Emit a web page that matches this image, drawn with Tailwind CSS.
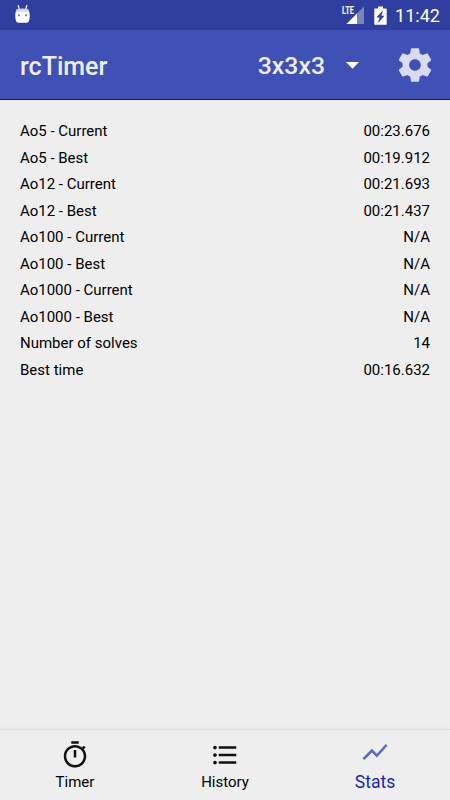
<!DOCTYPE html>
<html lang="en">
  <head>
    <meta charset="UTF-8" />
    <meta name="viewport" content="width=device-width, initial-scale=1.0" />
    <title>rcTimer</title>
    <script src="https://cdn.jsdelivr.net/npm/@tailwindcss/browser@4"></script>
  </head>
  <body class="bg-[#eeeeee] font-[Roboto,sans-serif] text-black h-screen flex flex-col overflow-hidden">
    <!-- Status bar -->
    <div class="h-[30px] shrink-0 bg-[#303f9f] text-white flex items-center pl-[15px] pr-[10px]">
      <svg class="w-[15px] h-[18px] -mt-0.5" viewBox="0 0 15 18" fill="none">
        <path d="M3.2 0.5l1 3.5M11.8 0.5l-1 3.5" stroke="#fff" stroke-width="1.2" stroke-linecap="round"/>
        <path d="M1.5 4.2Q7.5 2.6 13.5 4.2L14 6.5H1z" fill="#d3d6ec"/>
        <path d="M0.8 6.3H14.2Q15.3 11.5 14 16Q13.6 17.7 11.5 17.8H3.5Q1.4 17.7 1 16Q-.3 11.5 .8 6.3z" fill="#fff"/>
        <path d="M3 9.2h2v2H3zM10 9.2h2v2h-2z" fill="#7f88c4"/>
      </svg>
      <svg class="w-[24px] h-[20px] ml-auto" viewBox="0 0 24 20">
        <path d="M23 1.5V19H5.5z" fill="#7b85c2"/>
        <path d="M0 0H14.5V9.5H0z" fill="#303f9f"/>
        <path d="M16 8.5V19H5.5z" fill="#fff"/>
        <text x="1" y="9" font-family="Roboto, sans-serif" font-size="10.5" font-weight="700" fill="#fff" textLength="12" lengthAdjust="spacingAndGlyphs">LTE</text>
      </svg>
      <svg class="w-[13px] h-[19px] ml-[9px]" viewBox="0 0 13 19">
        <path d="M4 0.5h5v2h3q.7 0 .7.8V18q0 .7-.7.7H1q-.7 0-.7-.7V3.3q0-.8.7-.8h3z" fill="#fff"/>
        <path d="M8.5 5L3 11.2h3L4.5 16.2L10 10H7z" fill="#303f9f" stroke="#303f9f" stroke-width=".6"/>
      </svg>
      <span class="ml-[8px] w-[45px] text-[18px] leading-[30px] text-center whitespace-nowrap relative top-px">11:42</span>
    </div>

    <!-- Toolbar -->
    <header class="h-[70px] shrink-0 bg-[#3f51b5] border-b border-[#001694] text-[#eeeeee] flex items-center pl-5 pr-[15px] pt-[3px]">
      <h1 class="text-[25px] font-medium leading-none">rcTimer</h1>
      <div class="ml-auto flex items-center">
        <span class="text-[24.8px] font-medium leading-none pt-px">3x3x3</span>
        <svg class="w-[13px] h-[7px] ml-[21px] -mt-px" viewBox="0 0 13 7"><path d="M0 0h13L6.5 6.7z" fill="#fff"/></svg>
      </div>
      <svg class="w-10 h-10 ml-[36px] -mt-0.5" viewBox="0 0 24 24" fill="#d9dcf0">
        <path d="M19.43 12.98c.04-.32.07-.64.07-.98s-.03-.66-.07-.98l2.11-1.65c.19-.15.24-.42.12-.64l-2-3.46c-.12-.22-.39-.3-.61-.22l-2.49 1c-.52-.4-1.08-.73-1.69-.98l-.38-2.65C14.46 2.18 14.25 2 14 2h-4c-.25 0-.46.18-.49.42l-.38 2.65c-.61.25-1.17.59-1.69.98l-2.49-1c-.23-.09-.49 0-.61.22l-2 3.46c-.13.22-.07.49.12.64l2.11 1.65c-.04.32-.07.65-.07.98s.03.66.07.98l-2.11 1.65c-.19.15-.24.42-.12.64l2 3.46c.12.22.39.3.61.22l2.49-1c.52.4 1.08.73 1.69.98l.38 2.65c.03.24.24.42.49.42h4c.25 0 .46-.18.49-.42l.38-2.65c.61-.25 1.17-.59 1.69-.98l2.49 1c.23.09.49 0 .61-.22l2-3.46c.12-.22.07-.49-.12-.64l-2.11-1.65zM12 15.5c-1.93 0-3.5-1.57-3.5-3.5s1.57-3.5 3.5-3.5 3.5 1.57 3.5 3.5-1.57 3.5-3.5 3.5z"/>
      </svg>
    </header>

    <!-- Statistics -->
    <main class="flex-1 px-5 pt-[18px] text-[15px] leading-[26.55px]">
      <div class="flex justify-between"><span>Ao5 - Current</span><span>00:23.676</span></div>
      <div class="flex justify-between"><span>Ao5 - Best</span><span>00:19.912</span></div>
      <div class="flex justify-between"><span>Ao12 - Current</span><span>00:21.693</span></div>
      <div class="flex justify-between"><span>Ao12 - Best</span><span>00:21.437</span></div>
      <div class="flex justify-between"><span>Ao100 - Current</span><span>N/A</span></div>
      <div class="flex justify-between"><span>Ao100 - Best</span><span>N/A</span></div>
      <div class="flex justify-between"><span>Ao1000 - Current</span><span>N/A</span></div>
      <div class="flex justify-between"><span>Ao1000 - Best</span><span>N/A</span></div>
      <div class="flex justify-between"><span>Number of solves</span><span>14</span></div>
      <div class="flex justify-between"><span>Best time</span><span>00:16.632</span></div>
    </main>

    <!-- Bottom navigation -->
    <nav class="h-[71px] shrink-0 border-t border-[#e0e0e0] grid grid-cols-3 shadow-[0_-1px_2px_rgba(0,0,0,0.04)]">
      <a class="flex flex-col items-center pt-[10px]">
        <svg class="w-[30px] h-[30px]" viewBox="0 0 24 24" fill="#111">
          <path d="M15 1H9v2h6V1zm-4 13h2V8h-2v6zm8.03-6.61l1.42-1.42c-.43-.51-.9-.99-1.41-1.41l-1.42 1.42C16.07 4.74 14.12 4 12 4c-4.97 0-9 4.03-9 9s4.02 9 9 9 9-4.03 9-9c0-2.12-.74-4.07-1.97-5.61zM12 20c-3.87 0-7-3.13-7-7s3.13-7 7-7 7 3.13 7 7-3.13 7-7 7z"/>
        </svg>
        <span class="text-[15px] leading-5 mt-[2px]">Timer</span>
      </a>
      <a class="flex flex-col items-center pt-[10px]">
        <svg class="w-[30px] h-[30px]" viewBox="0 0 24 24" fill="#111">
          <path d="M4 10.5c-.83 0-1.5.67-1.5 1.5s.67 1.5 1.5 1.5 1.5-.67 1.5-1.5-.67-1.5-1.5-1.5zm0-6c-.83 0-1.5.67-1.5 1.5S3.17 7.5 4 7.5 5.5 6.83 5.5 6 4.83 4.5 4 4.5zm0 12c-.83 0-1.5.68-1.5 1.5s.68 1.5 1.5 1.5 1.5-.68 1.5-1.5-.67-1.5-1.5-1.5zM7 19h14v-2H7v2zm0-6h14v-2H7v2zm0-8v2h14V5H7z"/>
        </svg>
        <span class="text-[15px] leading-5 mt-[2px]">History</span>
      </a>
      <a class="flex flex-col items-center pt-[7px]">
        <svg class="w-[30px] h-[30px]" viewBox="0 0 24 24" fill="#5c6bc0">
          <path d="M3.5 18.49l6-6.01 4 4L22 6.92l-1.41-1.41-7.09 7.97-4-4L2 16.99z"/>
        </svg>
        <span class="text-[17.5px] leading-5 mt-[5px] text-[#1727b5]">Stats</span>
      </a>
    </nav>
  </body>
</html>
